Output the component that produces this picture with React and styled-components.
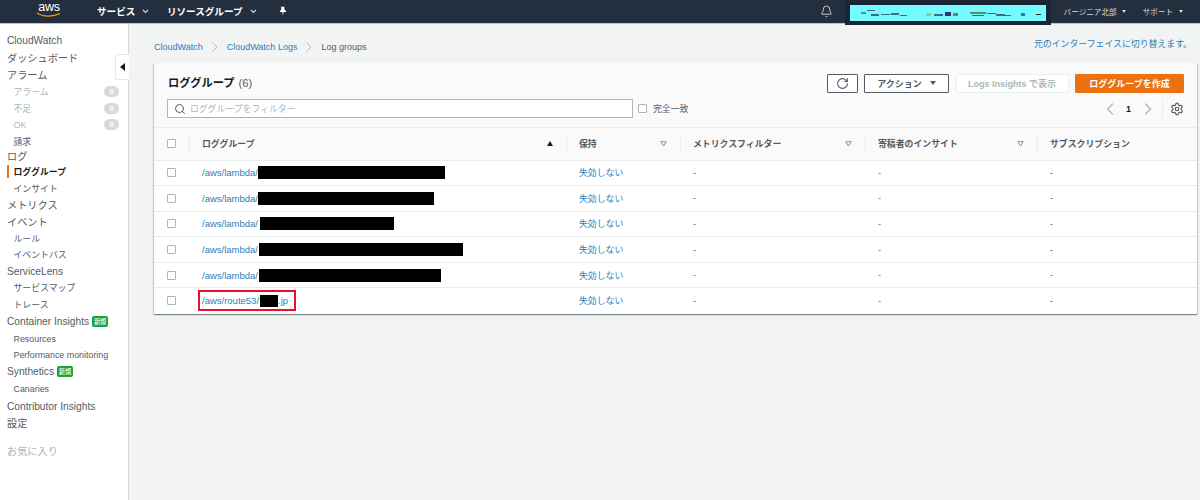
import React from 'react'
import styled, { createGlobalStyle } from 'styled-components'
import { Bell, ChevronLeft, ChevronRight, RotateCw, Search, Settings } from 'lucide-react'

const GlobalStyle = createGlobalStyle`
  html, body {
    margin: 0;
    background: #f2f3f3;
  }
  * {
    box-sizing: border-box;
  }
  body {
    font-family: "Liberation Sans", "Noto Sans CJK JP", sans-serif;
    font-size: 8.9px;
    color: #16191f;
  }
`

const Colors = {
  link: '#2a7fba',
  ink: '#545b64',
  line: '#eaeded',
  nav: '#232f3e',
  orange: '#ec7211',
}

const Page = styled.div`
  width: 1200px;
  height: 500px;
  overflow: hidden;
  display: flex;
  flex-direction: column;
`

/* top bar */
const TopBar = styled.header`
  height: 24px;
  flex: none;
  display: flex;
  align-items: center;
  background: ${Colors.nav};
  border-bottom: 1px solid #6fe3ea;
  color: #fff;
  padding: 0 17.5px 1px 36px;
`

const Logo = styled.div`
  width: 26px;
  height: 21px;
  margin-right: 35px;
  display: flex;
  flex-direction: column;
  align-items: center;
  font-size: 12.5px;
  font-weight: 400;
  line-height: 12px;
  letter-spacing: -0.2px;
  svg {
    display: block;
    margin-top: -1px;
  }
`

const TopLink = styled.div`
  display: flex;
  align-items: center;
  font-size: ${(p) => (p.$small ? '7.6px' : '9.6px')};
  font-weight: ${(p) => (p.$small ? 400 : 700)};
  color: ${(p) => (p.$small ? '#d5dbdb' : '#fff')};
  margin-right: ${(p) => p.$gap}px;
`

const Chevron = styled.svg`
  margin-left: ${(p) => p.$gap}px;
  display: block;
`

const Caret = styled.span`
  display: inline-block;
  width: 0;
  height: 0;
  margin-left: ${(p) => p.$gap || 6}px;
  border-left: ${(p) => p.$size || 2.5}px solid transparent;
  border-right: ${(p) => p.$size || 2.5}px solid transparent;
  border-top: ${(p) => (p.$size ? p.$size + 1 : 3)}px solid ${(p) => p.$color || '#d5dbdb'};
`

const TopSpacer = styled.div`
  flex: 1;
`

const AccountMask = styled.div`
  width: 206px;
  height: 25px;
  margin: 0 13px 0 12px;
  padding: 5px 5px 2px 5px;
  background: #1b2533;
  align-self: flex-start;
`

const AccountFill = styled.svg`
  display: block;
`

/* body */
const Body = styled.div`
  flex: 1;
  display: flex;
  min-height: 0;
`

const Sidebar = styled.nav`
  position: relative;
  width: 129px;
  flex: none;
  background: #fff;
  border-right: 1px solid #d5dbdb;
  padding-top: 8.2px;
`

const CollapseTab = styled.div`
  position: absolute;
  top: 30px;
  right: -1px;
  width: 14px;
  height: 26px;
  background: #fff;
  border: 1px solid #e3e6e6;
  border-right: none;
  border-radius: 3px 0 0 3px;
  display: flex;
  align-items: center;
  justify-content: center;
  &::before {
    content: '';
    border-top: 4px solid transparent;
    border-bottom: 4px solid transparent;
    border-right: 5px solid #16191f;
  }
`

const NavItem = styled.div`
  position: relative;
  height: 16.6px;
  display: flex;
  align-items: center;
  padding-left: ${(p) => (p.$sub ? 13.5 : 7)}px;
  font-size: ${(p) => (p.$sub ? '8.9px' : '10.2px')};
  font-weight: ${(p) => (p.$active ? 700 : 400)};
  color: ${(p) => (p.$active ? '#16191f' : p.$muted ? '#aab7b8' : Colors.ink)};
  margin-top: ${(p) => p.$top || 0}px;
`

const ActiveMark = styled.span`
  position: absolute;
  left: 7px;
  top: 2px;
  bottom: 2px;
  width: 2px;
  background: ${Colors.orange};
`

const CountBadge = styled.span`
  position: absolute;
  left: 104px;
  top: 2.8px;
  width: 15px;
  height: 11px;
  border-radius: 6px;
  background: #d5dbdb;
  color: #fff;
  font-size: 7.5px;
  font-weight: 700;
  line-height: 11px;
  text-align: center;
`

const NewBadge = styled.span`
  margin-left: 3px;
  width: 16px;
  height: 11px;
  line-height: 11px;
  text-align: center;
  border-radius: 2px;
  background: #16a13a;
  color: #d8f5df;
  font-size: 6.25px;
  font-weight: 700;
`

const Main = styled.main`
  flex: 1;
  min-width: 0;
  padding: 0 3px 0 25px;
`

const TopRow = styled.div`
  height: 39px;
  display: flex;
  justify-content: space-between;
  padding-right: 5px;
`

const Crumbs = styled.div`
  display: flex;
  align-items: center;
  height: 16px;
  margin-top: 15px;
  font-size: 9px;
  color: ${Colors.ink};
`

const CrumbArrow = styled(ChevronRight)`
  margin: 0 4px;
  color: #aab7b8;
`

const LinkText = styled.a`
  color: ${Colors.link};
  text-decoration: none;
`

const SwitchLink = styled(LinkText)`
  margin-top: 15px;
  line-height: 10px;
`

const Card = styled.section`
  background: #fff;
  box-shadow: 0 1px 1px 0 rgba(0, 28, 36, 0.3), 1px 1px 1px 0 rgba(0, 28, 36, 0.15), -1px 1px 1px 0 rgba(0, 28, 36, 0.15);
`

const CardHead = styled.div`
  height: 65px;
  background: #fafafa;
  border-bottom: 1px solid ${Colors.line};
  padding: 10px 13px 0 13px;
`

const TitleRow = styled.div`
  display: flex;
  align-items: center;
  justify-content: space-between;
  height: 20px;
`

const Title = styled.h1`
  margin: 0 0 2px 1px;
  font-size: 11.25px;
  font-weight: 700;
  color: #16191f;
`

const TitleCount = styled.span`
  margin-left: 4px;
  font-weight: 400;
  color: ${Colors.ink};
`

const Actions = styled.div`
  display: flex;
  gap: 6.5px;
`

const Button = styled.button`
  width: ${(p) => p.$w}px;
  height: 19px;
  padding: 0;
  display: flex;
  align-items: center;
  justify-content: center;
  font-family: inherit;
  font-size: 9px;
  font-weight: 700;
  border-radius: 1px;
  background: ${(p) => (p.$primary ? Colors.orange : '#fff')};
  color: ${(p) => (p.$primary ? '#fff' : p.$off ? '#aab7b8' : Colors.ink)};
  border: 1px solid ${(p) => (p.$primary ? Colors.orange : p.$off ? '#eaeded' : '#545b64')};
`

const FilterRow = styled.div`
  display: flex;
  align-items: center;
  height: 19px;
  margin-top: 6px;
`

const SearchBox = styled.div`
  width: 466px;
  height: 19px;
  display: flex;
  align-items: center;
  padding-left: 6px;
  background: #fff;
  border: 1px solid #aab7b8;
  color: #aab7b8;
  svg {
    color: ${Colors.ink};
    margin-right: 4px;
  }
`

const Check = styled.span`
  display: block;
  width: 9px;
  height: 9px;
  background: #fff;
  border: 1px solid #aab7b8;
  border-radius: 1px;
  flex: none;
`

const ExactLabel = styled.label`
  display: flex;
  align-items: center;
  gap: 6px;
  margin-left: 5px;
  color: ${Colors.ink};
`

const Pager = styled.div`
  margin-left: auto;
  display: flex;
  align-items: center;
  height: 19px;
  color: #aab7b8;
`

const PageNo = styled.span`
  margin: 0 5.5px;
  width: 7px;
  text-align: center;
  color: #16191f;
  font-weight: 700;
`

const PagerGap = styled.span`
  width: 1px;
  height: 19px;
  background: ${Colors.line};
  margin: 0 7.5px 0 4px;
`

const GRID = '35px 377px 114px 185px 172px 1fr'

const HeadRow = styled.div`
  display: grid;
  grid-template-columns: ${GRID};
  height: 32.5px;
  align-items: center;
  background: #fafafa;
  border-bottom: 1px solid ${Colors.line};
  font-weight: 700;
  color: ${Colors.ink};
`

const HeadCell = styled.div`
  height: 17px;
  display: flex;
  align-items: center;
  justify-content: space-between;
  border-left: 1px solid ${Colors.line};
  padding: 0 ${(p) => p.$right || 13}px 0 ${(p) => p.$left || 12}px;
`

const SortUp = styled.span`
  border-left: 3px solid transparent;
  border-right: 3px solid transparent;
  border-bottom: 5px solid #16191f;
`

const SortIdle = styled.svg`
  display: block;
`

const CheckCell = styled.div`
  padding-left: 13px;
`

const Row = styled.div`
  display: grid;
  grid-template-columns: ${GRID};
  height: 25.6px;
  align-items: center;
  border-bottom: 1px solid ${(p) => (p.$last ? 'transparent' : Colors.line)};
  color: ${Colors.ink};
`

const Cell = styled.div`
  padding-left: ${(p) => p.$left || 13}px;
  color: ${(p) => (p.$link ? Colors.link : 'inherit')};
`

const NameLink = styled(LinkText)`
  display: flex;
  align-items: center;
  font-size: 9.5px;
`

const Blackout = styled.span`
  display: block;
  width: ${(p) => p.$w}px;
  height: ${(p) => p.$h || 13}px;
  margin-left: ${(p) => p.$gap || 0}px;
  background: #000;
`

const Highlight = styled.div`
  display: inline-flex;
  align-items: center;
  height: 21px;
  margin-left: -4px;
  padding: 0 6px 0 2px;
  border: 2px solid #e8112d;
`

const rows = [
  { width: 187, gap: 0 },
  { width: 176, gap: 0 },
  { width: 134, gap: 2 },
  { width: 204, gap: 1 },
  { width: 182, gap: 1 },
]

const sideItems = [
  { label: 'CloudWatch' },
  { label: 'ダッシュボード' },
  { label: 'アラーム', top: 0.5 },
  { label: 'アラーム', sub: true, muted: true, count: 0, top: 1 },
  { label: '不足', sub: true, muted: true, count: 0 },
  { label: 'OK', sub: true, muted: true, count: 0 },
  { label: '請求', sub: true },
  { label: 'ログ', top: -3 },
  { label: 'ロググループ', sub: true, active: true },
  { label: 'インサイト', sub: true },
  { label: 'メトリクス' },
  { label: 'イベント' },
  { label: 'ルール', sub: true },
  { label: 'イベントバス', sub: true },
  { label: 'ServiceLens' },
  { label: 'サービスマップ', sub: true },
  { label: 'トレース', sub: true },
  { label: 'Container Insights', fresh: true },
  { label: 'Resources', sub: true, top: 1 },
  { label: 'Performance monitoring', sub: true },
  { label: 'Synthetics', fresh: true },
  { label: 'Canaries', sub: true, top: 1 },
  { label: 'Contributor Insights' },
  { label: '設定' },
  { label: 'お気に入り', muted: true, top: 11 },
]

const DownChevron = ({ gap }) => (
  <Chevron $gap={gap} width="7" height="5" viewBox="0 0 7 5" fill="none" stroke="#d5dbdb" strokeWidth="1.1">
    <path d="M1 1l2.5 2.5L6 1" />
  </Chevron>
)

const IdleSort = () => (
  <SortIdle width="7" height="6" viewBox="0 0 7 6" fill="none" stroke="#879596" strokeWidth="1">
    <path d="M0.8 0.7h5.4L3.5 5z" />
  </SortIdle>
)

const Pin = () => (
  <svg width="10" height="10" viewBox="0 0 10 10" fill="#fff">
    <path d="M2.6 0.8l4.2-0.1-0.6 1 0.5 2.2 1.5 1.2-0.1 0.8H5.6L5 9.4 4.2 5.9H1.8l0.1-0.9 1.3-1.2 0.1-2z" />
  </svg>
)

// scribbled-out account name, as it is in the picture
const AccountScribble = () => (
  <AccountFill width="196" height="16" viewBox="0 0 196 16">
    <rect width="196" height="16" fill="#73fbff" />
    <g fill="#3d6b84">
      <rect x="11" y="7" width="5" height="2" fill="#4a90c8" />
      <rect x="17" y="5" width="8" height="1" />
      <rect x="21" y="9" width="8" height="2" />
      <rect x="31" y="9" width="9" height="1" />
      <rect x="41" y="8" width="8" height="2" />
      <rect x="50" y="10" width="7" height="1" />
      <rect x="76" y="8" width="5" height="3" fill="#8ccf8c" />
      <rect x="84" y="9" width="9" height="2" />
      <rect x="95" y="7" width="6" height="4" fill="#3e2d78" />
      <rect x="103" y="8" width="5" height="3" fill="#5c8a70" />
      <rect x="120" y="7" width="16" height="2" fill="#5c8a70" />
      <rect x="122" y="10" width="12" height="1" />
      <rect x="137" y="8" width="9" height="1" />
      <rect x="146" y="9" width="9" height="2" />
      <rect x="155" y="10" width="6" height="1" />
      <rect x="171" y="8" width="4" height="3" fill="#2f6fc8" />
      <rect x="186" y="9" width="5" height="1" fill="#222" />
    </g>
  </AccountFill>
)

export default function App() {
  return (
    <Page>
      <GlobalStyle />
      <TopBar>
        <Logo>
          aws
          <svg width="26" height="6" viewBox="0 0 26 6" fill="none" stroke="#f90" strokeWidth="1.3">
            <path d="M1 1c6 4 16 4 23 0.5" />
          </svg>
        </Logo>
        <TopLink $gap={18}>
          サービス
          <DownChevron gap={6.5} />
        </TopLink>
        <TopLink $gap={21}>
          リソースグループ
          <DownChevron gap={7.5} />
        </TopLink>
        <Pin />
        <TopSpacer />
        <Bell size={13} color="#eaeded" strokeWidth={1.5} />
        <AccountMask>
          <AccountScribble />
        </AccountMask>
        <TopLink $small $gap={16.5}>
          バージニア北部
          <Caret $gap={5.5} />
        </TopLink>
        <TopLink $small $gap={0}>
          サポート
          <Caret $gap={5.5} />
        </TopLink>
      </TopBar>
      <Body>
        <Sidebar>
          <CollapseTab />
          {sideItems.map((item, i) => (
            <NavItem key={i} $sub={item.sub} $muted={item.muted} $active={item.active} $top={item.top}>
              {item.active && <ActiveMark />}
              {item.label}
              {item.fresh && <NewBadge>新規</NewBadge>}
              {item.count !== undefined && <CountBadge>{item.count}</CountBadge>}
            </NavItem>
          ))}
        </Sidebar>
        <Main>
          <TopRow>
            <Crumbs>
              <LinkText>CloudWatch</LinkText>
              <CrumbArrow size={16} strokeWidth={1.3} />
              <LinkText>CloudWatch Logs</LinkText>
              <CrumbArrow size={16} strokeWidth={1.3} />
              Log groups
            </Crumbs>
            <SwitchLink>元のインターフェイスに切り替えます。</SwitchLink>
          </TopRow>
          <Card>
            <CardHead>
              <TitleRow>
                <Title>
                  ロググループ<TitleCount>(6)</TitleCount>
                </Title>
                <Actions>
                  <Button $w={31}>
                    <RotateCw size={13} strokeWidth={2} />
                  </Button>
                  <Button $w={85}>
                    アクション
                    <Caret $gap={8} $size={3.5} $color="#545b64" />
                  </Button>
                  <Button $w={113} $off>
                    Logs Insights で表示
                  </Button>
                  <Button $w={109} $primary>
                    ロググループを作成
                  </Button>
                </Actions>
              </TitleRow>
              <FilterRow>
                <SearchBox>
                  <Search size={12} strokeWidth={2} />
                  ロググループをフィルター
                </SearchBox>
                <ExactLabel>
                  <Check />
                  完全一致
                </ExactLabel>
                <Pager>
                  <ChevronLeft size={20} strokeWidth={1.5} />
                  <PageNo>1</PageNo>
                  <ChevronRight size={20} strokeWidth={1.5} />
                  <PagerGap />
                  <Settings size={14} color="#545b64" strokeWidth={2} />
                </Pager>
              </FilterRow>
            </CardHead>
            <HeadRow>
              <CheckCell>
                <Check />
              </CheckCell>
              <HeadCell>
                ロググループ
                <SortUp />
              </HeadCell>
              <HeadCell>
                保持
                <IdleSort />
              </HeadCell>
              <HeadCell>
                メトリクスフィルター
                <IdleSort />
              </HeadCell>
              <HeadCell>
                寄稿者のインサイト
                <IdleSort />
              </HeadCell>
              <HeadCell>サブスクリプション</HeadCell>
            </HeadRow>
            {rows.map((row, i) => (
              <Row key={i}>
                <CheckCell>
                  <Check />
                </CheckCell>
                <Cell>
                  <NameLink>
                    /aws/lambda/
                    <Blackout $w={row.width} $gap={row.gap} />
                  </NameLink>
                </Cell>
                <Cell $link>失効しない</Cell>
                <Cell>-</Cell>
                <Cell $link>-</Cell>
                <Cell>-</Cell>
              </Row>
            ))}
            <Row $last>
              <CheckCell>
                <Check />
              </CheckCell>
              <Cell>
                <Highlight>
                  <NameLink>
                    /aws/route53/
                    <Blackout $w={18} $h={12} $gap={1} />
                    .jp
                  </NameLink>
                </Highlight>
              </Cell>
              <Cell $link>失効しない</Cell>
              <Cell>-</Cell>
              <Cell $link>-</Cell>
              <Cell>-</Cell>
            </Row>
          </Card>
        </Main>
      </Body>
    </Page>
  )
}
